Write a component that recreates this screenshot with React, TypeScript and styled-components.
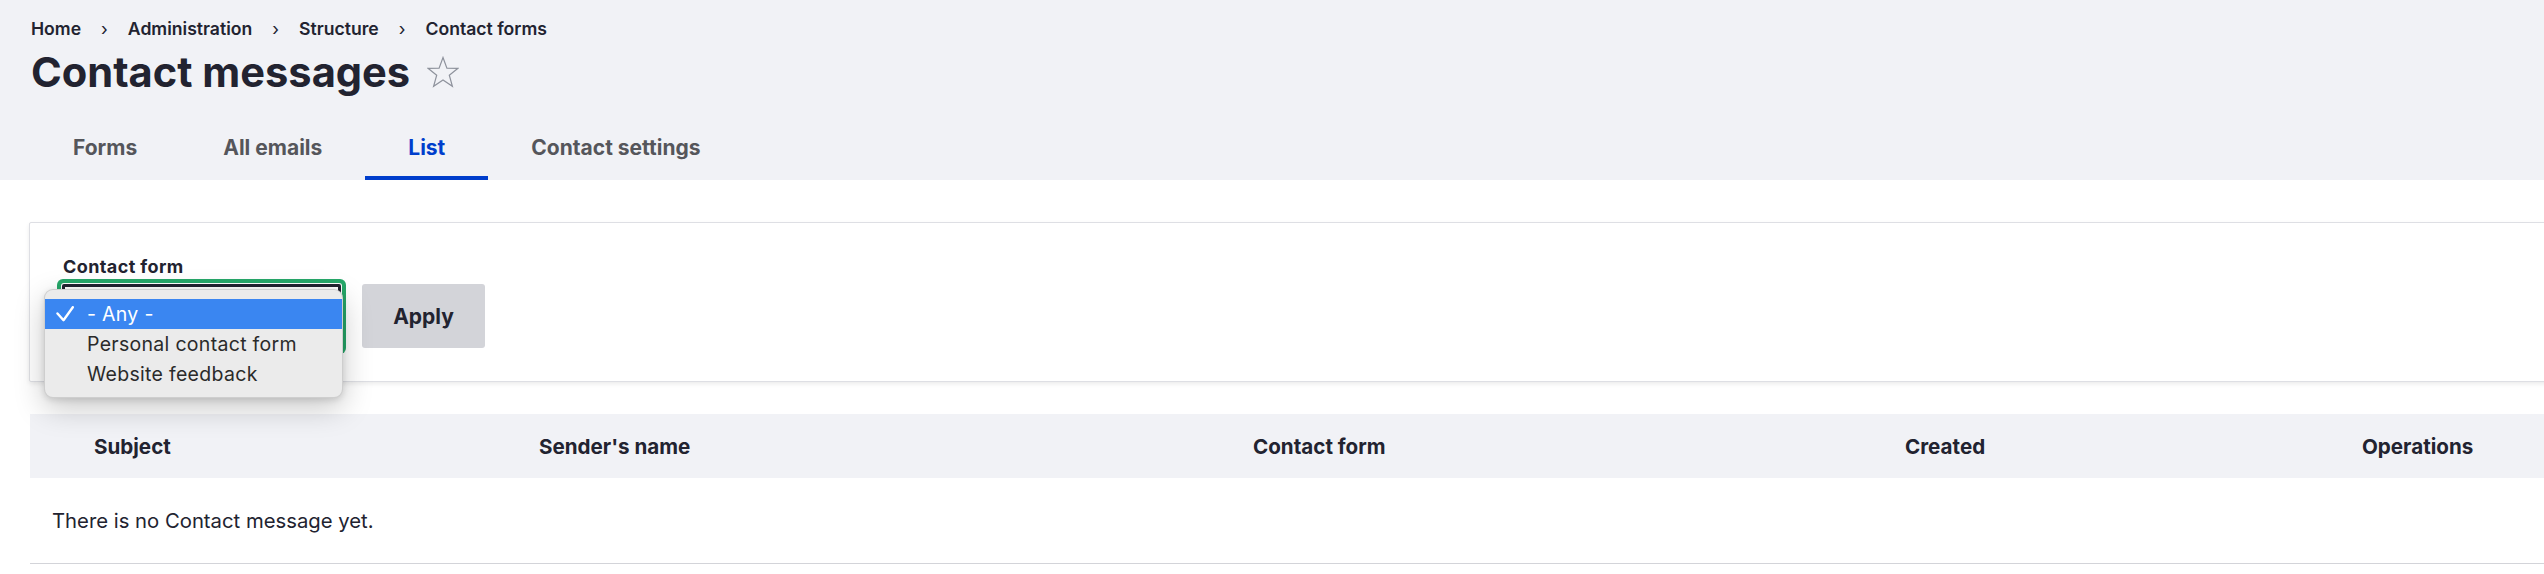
import React from 'react'
import styled, { createGlobalStyle } from 'styled-components'

const GlobalStyle = createGlobalStyle`
  html, body {
    margin: 0;
    padding: 0;
    overflow: hidden;
    background: #ffffff;
  }
  body {
    font-family: Inter, "Noto Sans", "Liberation Sans", sans-serif;
    color: #222330;
  }
  * {
    box-sizing: border-box;
  }
`

const crumbs = ['Home', 'Administration', 'Structure', 'Contact forms']
const tabs = ['Forms', 'All emails', 'List', 'Contact settings']
const options = ['- Any -', 'Personal contact form', 'Website feedback']
const columns = [
  { label: 'Subject', width: 445 },
  { label: "Sender's name", width: 714 },
  { label: 'Contact form', width: 652 },
  { label: 'Created', width: 457 },
  { label: 'Operations', width: 420 },
]

const App: React.FC = () => {
  return (
    <Page>
      <GlobalStyle />
      <Header>
        <Breadcrumb>
          {crumbs.map((c, i) => (
            <React.Fragment key={c}>
              {i > 0 && <Sep>›</Sep>}
              <Crumb>{c}</Crumb>
            </React.Fragment>
          ))}
        </Breadcrumb>
        <TitleRow>
          <Title>Contact messages</Title>
          <Star width="32" height="32" viewBox="0 0 32 32">
            <polygon
              points="16,1.5 19.9,12.1 31,12.3 22.3,19.2 25.4,30.3 16,23.9 6.6,30.3 9.7,19.2 1,12.3 12.1,12.1"
              fill="none"
              stroke="#8e929c"
              strokeWidth="1.2"
            />
          </Star>
        </TitleRow>
        <Tabs>
          {tabs.map((t) => (
            <Tab key={t} $active={t === 'List'}>{t}</Tab>
          ))}
        </Tabs>
      </Header>

      <Content>
        <FilterPanel>
          <Field>
            <Label>Contact form</Label>
            <SelectWrap>
              <Select />
              <Popup>
                {options.map((o, i) => (
                  <Option key={o} $selected={i === 0}>
                    <Check>
                      {i === 0 && (
                        <svg width="18" height="16" viewBox="0 0 18 16">
                          <path d="M1.5 7.5 L7.5 14.2 L16.8 1.2" fill="none" stroke="#ffffff" strokeWidth="2.4" strokeLinecap="round" strokeLinejoin="round" />
                        </svg>
                      )}
                    </Check>
                    {o}
                  </Option>
                ))}
              </Popup>
            </SelectWrap>
          </Field>
          <ApplyButton>Apply</ApplyButton>
        </FilterPanel>

        <Table>
          <colgroup>
            {columns.map((c) => (
              <col key={c.label} style={{ width: c.width }} />
            ))}
          </colgroup>
          <thead>
            <tr>
              {columns.map((c) => (
                <Th key={c.label}>{c.label}</Th>
              ))}
            </tr>
          </thead>
          <tbody>
            <tr>
              <Empty colSpan={columns.length}>There is no Contact message yet.</Empty>
            </tr>
          </tbody>
        </Table>
      </Content>
    </Page>
  )
}

export default App

const Page = styled.div`
  width: 2720px;
  min-height: 574px;
`

const Header = styled.header`
  background: #f1f2f6;
  padding: 19px 0 0 31px;
`

const Breadcrumb = styled.nav`
  display: flex;
  align-items: center;
  font-size: 17.6px;
  line-height: 20px;
  font-weight: 600;
`

const Crumb = styled.span`
  color: #222330;
`

const Sep = styled.span`
  padding: 0 20px 0 20px;
  font-weight: 400;
  color: #222330;
`

const TitleRow = styled.div`
  display: flex;
  align-items: center;
  gap: 17px;
  margin-top: 8px;
`

const Title = styled.h1`
  margin: 0;
  font-size: 41.6px;
  line-height: 50px;
  font-weight: 700;
  color: #222330;
`

const Star = styled.svg`
  display: block;
`

const Tabs = styled.nav`
  display: flex;
  margin: 19px 0 0 -1px;
`

const Tab = styled.div<{ $active?: boolean }>`
  padding: 20px 43px 16px;
  font-size: 21px;
  line-height: 24px;
  font-weight: 700;
  color: ${(p) => (p.$active ? '#003ecc' : '#55565b')};
  border-bottom: 4px solid ${(p) => (p.$active ? '#003ecc' : 'transparent')};
`

const Content = styled.main`
  padding: 42px 0 0 29px;
`

const FilterPanel = styled.section`
  display: flex;
  align-items: flex-end;
  gap: 21px;
  padding: 34px 33px 32px;
  border: 1px solid #dedfe4;
  border-radius: 2px;
  box-shadow: 0 2px 4px rgba(0, 0, 0, 0.08);
  background: #ffffff;
`

const Field = styled.div`
  display: flex;
  flex-direction: column;
  gap: 7px;
`

const Label = styled.label`
  font-size: 18px;
  line-height: 20px;
  font-weight: 700;
  letter-spacing: 0.4px;
  color: #222330;
`

const SelectWrap = styled.div`
  position: relative;
  margin-left: -1px;
`

const Select = styled.div`
  width: 279px;
  height: 65px;
  border: 3px solid #222330;
  border-radius: 2px;
  background: #ffffff;
  box-shadow: 0 0 0 1px #ffffff, 0 0 0 5px #26a769;
`

const Popup = styled.div`
  position: absolute;
  left: -18px;
  top: 5px;
  width: 299px;
  padding: 9px 0 8px;
  background: #ebebeb;
  border: 1px solid rgba(0, 0, 0, 0.12);
  border-radius: 9px;
  box-shadow: 0 10px 30px rgba(0, 0, 0, 0.22), 0 2px 6px rgba(0, 0, 0, 0.12);
  z-index: 2;
`

const Option = styled.div<{ $selected?: boolean }>`
  display: flex;
  align-items: center;
  height: 30px;
  padding-left: 11px;
  font-size: 19.5px;
  letter-spacing: 0.3px;
  color: ${(p) => (p.$selected ? '#ffffff' : '#2a2a2a')};
  background: ${(p) => (p.$selected ? '#3a86f1' : 'transparent')};
`

const Check = styled.span`
  display: flex;
  align-items: center;
  width: 31px;
`

const ApplyButton = styled.button`
  width: 123px;
  height: 64px;
  margin-bottom: 1px;
  border: 0;
  border-radius: 3px;
  background: #d3d4d9;
  font-family: Inter, "Liberation Sans", sans-serif;
  font-size: 21px;
  font-weight: 700;
  color: #222330;
`

const Table = styled.table`
  margin: 32px 0 0 1px;
  border-collapse: collapse;
  table-layout: fixed;
  width: 2688px;
`

const Th = styled.th`
  height: 64px;
  padding: 0 0 0 64px;
  background: #f1f2f6;
  text-align: left;
  font-size: 20.6px;
  font-weight: 700;
  color: #222330;
`

const Empty = styled.td`
  height: 85px;
  padding: 0 0 0 22px;
  border-bottom: 1px solid #d3d4d9;
  font-size: 20.3px;
  color: #222330;
`
